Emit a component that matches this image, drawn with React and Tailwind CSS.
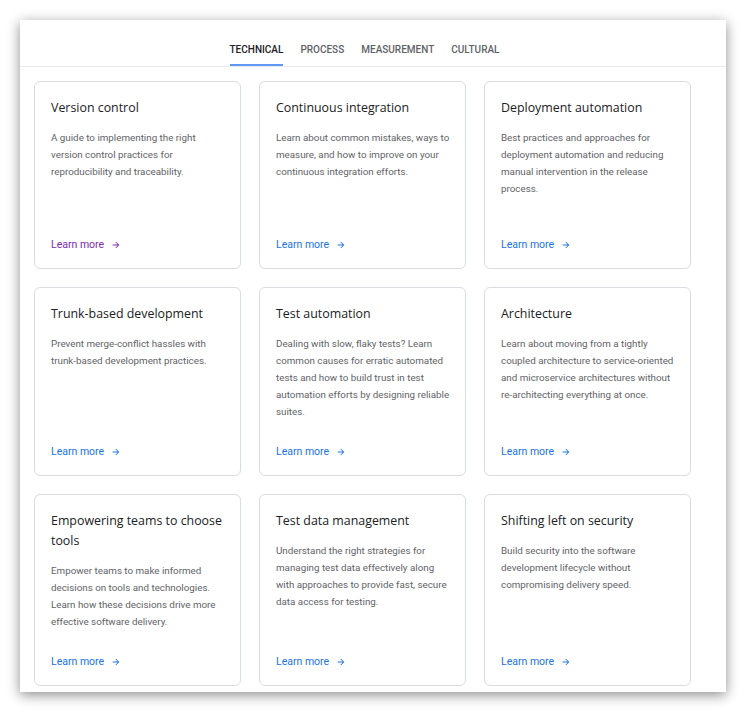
import React from "react"

const tabs = ["TECHNICAL", "PROCESS", "MEASUREMENT", "CULTURAL"]

const cards = [
  {
    title: "Version control",
    body: "A guide to implementing the right version control practices for reproducibility and traceability.",
    visited: true,
  },
  {
    title: "Continuous integration",
    body: "Learn about common mistakes, ways to measure, and how to improve on your continuous integration efforts.",
  },
  {
    title: "Deployment automation",
    body: "Best practices and approaches for deployment automation and reducing manual intervention in the release process.",
  },
  {
    title: "Trunk-based development",
    body: "Prevent merge-conflict hassles with trunk-based development practices.",
  },
  {
    title: "Test automation",
    body: "Dealing with slow, flaky tests? Learn common causes for erratic automated tests and how to build trust in test automation efforts by designing reliable suites.",
  },
  {
    title: "Architecture",
    body: "Learn about moving from a tightly coupled architecture to service-oriented and microservice architectures without re-architecting everything at once.",
  },
  {
    title: "Empowering teams to choose tools",
    body: "Empower teams to make informed decisions on tools and technologies. Learn how these decisions drive more effective software delivery.",
  },
  {
    title: "Test data management",
    body: "Understand the right strategies for managing test data effectively along with approaches to provide fast, secure data access for testing.",
  },
  {
    title: "Shifting left on security",
    body: "Build security into the software development lifecycle without compromising delivery speed.",
  },
]

function ArrowIcon() {
  return (
    <svg width="10" height="10" viewBox="0 0 24 24" fill="currentColor">
      <path d="M12 4l-1.41 1.41L16.17 11H4v2h12.17l-5.58 5.59L12 20l8-8z" />
    </svg>
  )
}

function Card({ card }) {
  const linkColor = card.visited ? "text-[#7b2bb0]" : "text-[#1a73e8]"
  return (
    <div className="flex flex-col min-h-[188px] border border-[#dadce0] rounded-[6px] bg-white pt-4 pb-[13px] pl-4 pr-[13px]">
      <h3 className="text-[12.4px] leading-[20px] text-[#202124] font-['Open_Sans',sans-serif]">
        {card.title}
      </h3>
      <p className="mt-[11px] text-[9.8px] leading-[17px] text-[#5f6368]">{card.body}</p>
      <div className={`mt-auto pt-[22px] flex items-center gap-[7px] text-[10.5px] leading-[20px] ${linkColor}`}>
        <span>Learn more</span>
        <ArrowIcon />
      </div>
    </div>
  )
}

export default function App() {
  return (
    <div className="min-h-[713px] bg-white pt-5 pl-5 font-['Roboto',sans-serif]">
      <div className="w-[706px] h-[672px] bg-white shadow-[0_3px_12px_rgba(0,0,0,0.45)] overflow-hidden">
        {/* Tabs */}
        <div className="border-b border-[#e8eaed]">
          <div className="ml-[16px] w-[657px] flex justify-center gap-[17px] pt-[23px]">
            {tabs.map((t, i) => (
              <div
                key={t}
                className={`pb-[7px] border-b-2 text-[10px] leading-[14px] font-medium ${
                  i === 0 ? "border-[#5e97f6] text-[#202124]" : "border-transparent text-[#5f6368]"
                }`}
              >
                {t}
              </div>
            ))}
          </div>
        </div>

        {/* Cards */}
        <div className="ml-[14px] mt-[14px] grid grid-cols-[207px_207px_207px] gap-[18px]">
          {cards.map((c) => (
            <Card key={c.title} card={c} />
          ))}
        </div>
      </div>
    </div>
  )
}
